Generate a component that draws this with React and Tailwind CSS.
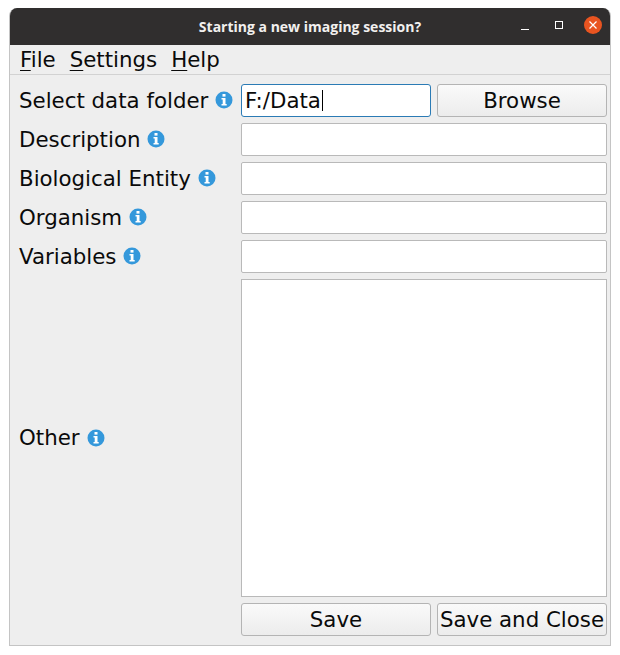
const labelRows = [
  { label: 'Description' },
  { label: 'Biological Entity' },
  { label: 'Organism' },
  { label: 'Variables' },
]

function InfoIcon() {
  return (
    <svg width="18" height="18" viewBox="0 0 18 18" className="ml-[7px] shrink-0">
      <circle cx="9" cy="9" r="8.5" fill="#3498db" />
      <rect x="7.5" y="3" width="3" height="2.6" fill="#fff" />
      <path d="M6.5 7h4v6h1.2v1.6H6.5V13h1.2V8.6H6.5z" fill="#fff" />
    </svg>
  )
}

function Label({ text }) {
  return (
    <div className="flex items-center text-[21.33px] leading-none text-[#0a0a0a] whitespace-nowrap">
      <span>{text}</span>
      <InfoIcon />
    </div>
  )
}

function Button({ children, className }) {
  return (
    <button className={`h-[33px] rounded-[3px] border border-[#b4b4b4] bg-gradient-to-b from-[#fafafa] to-[#ececec] text-[21.33px] leading-none text-[#0a0a0a] whitespace-nowrap ${className}`}>
      {children}
    </button>
  )
}

function Field() {
  return <div className="h-[33px] w-[366px] rounded-[2px] border border-[#b9b9b9] bg-white" />
}

function MenuItem({ first, rest }) {
  return (
    <span>
      <span className="underline underline-offset-[3px] decoration-1">{first}</span>
      {rest}
    </span>
  )
}

export default function App() {
  return (
    <div className="h-[655px] w-[620px] bg-white pl-[9px] pt-[8px] font-['DejaVu_Sans',sans-serif]">
      <div className="flex h-[638px] w-[602px] flex-col overflow-hidden rounded-t-[8px] border-x border-b border-[#c4c4c4] bg-[#eeeeee]">
        <div className="relative flex h-[37px] shrink-0 items-center justify-center bg-[#302e2e] -mx-px">
          <span className="text-[14px] font-bold text-[#f2f0ee] font-['Open_Sans',sans-serif]">Starting a new imaging session?</span>
          <div className="absolute right-[9px] top-[8px] flex items-center">
            <div className="mr-[26px] mt-[9px] h-px w-[8px] bg-white" />
            <div className="mr-[21px] h-[8px] w-[8px] border border-white" />
            <div className="flex h-[18px] w-[18px] items-center justify-center rounded-full bg-[#e95420]">
              <svg width="10" height="10" viewBox="0 0 10 10">
                <path d="M1.5 1.5l7 7M8.5 1.5l-7 7" stroke="#fff" strokeWidth="1.2" />
              </svg>
            </div>
          </div>
        </div>

        <div className="flex h-[30px] shrink-0 items-center gap-[14px] border-b border-[#d2d2d2] pl-[10px] text-[21.33px] leading-none text-[#0a0a0a]">
          <MenuItem first="F" rest="ile" />
          <MenuItem first="S" rest="ettings" />
          <MenuItem first="H" rest="elp" />
        </div>

        <div className="grid grid-cols-[216px_190px_170px] gap-x-[6px] gap-y-[6px] pl-[9px] pt-[9px]">
          <div className="flex items-center self-center"><Label text="Select data folder" /></div>
          <div className="flex h-[33px] items-center rounded-[3px] border border-[#2b7bb5] bg-white pl-[3px] text-[21.33px] leading-none text-[#0a0a0a]">
            F:/Data<span className="ml-px h-[21px] w-px bg-black" />
          </div>
          <Button>Browse</Button>

          {labelRows.map((row) => (
            <div key={row.label} className="contents">
              <div className="flex items-center"><Label text={row.label} /></div>
              <div className="col-span-2"><Field /></div>
            </div>
          ))}

          <div className="flex items-center"><Label text="Other" /></div>
          <div className="col-span-2 h-[318px] w-[366px] border border-[#b9b9b9] bg-white" />

          <div />
          <Button>Save</Button>
          <Button>Save and Close</Button>
        </div>
      </div>
    </div>
  )
}
